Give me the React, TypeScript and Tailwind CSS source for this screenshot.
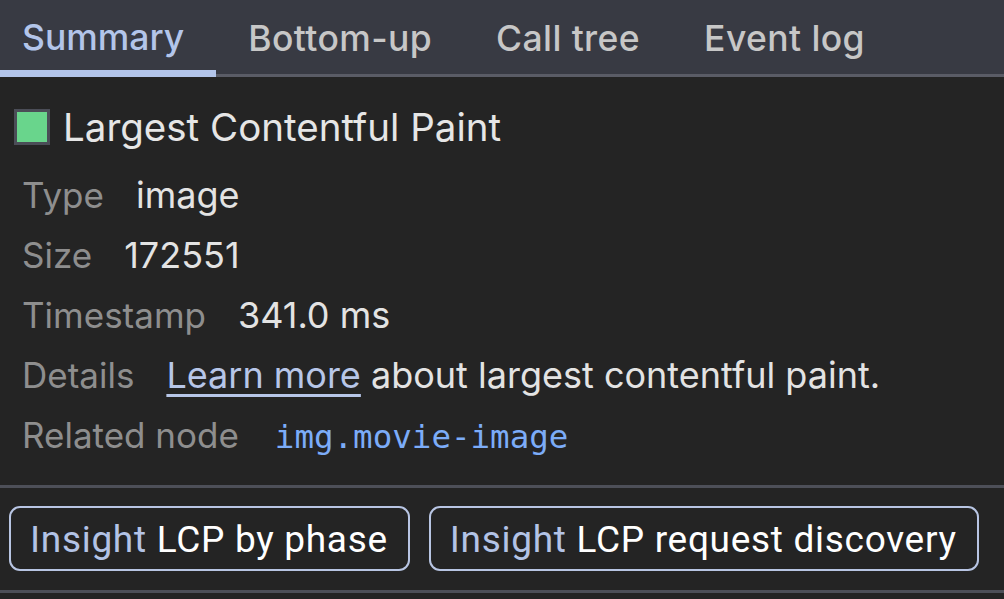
const tabs = ["Summary", "Bottom-up", "Call tree", "Event log"];

const rows: { label: string; value: React.ReactNode }[] = [
  { label: "Type", value: <span className="text-[#e3e3e3]">image</span> },
  { label: "Size", value: <span className="text-[#e3e3e3]">172551</span> },
  { label: "Timestamp", value: <span className="text-[#e3e3e3]">341.0 ms</span> },
  {
    label: "Details",
    value: (
      <span className="text-[#e3e3e3]">
        <a className="text-[#b7c6e8] underline decoration-[2.5px] underline-offset-[6px]">Learn more</a> about largest
        contentful paint.
      </span>
    ),
  },
  {
    label: "Related node",
    value: (
      <span className="ml-[4px] font-['DejaVu_Sans_Mono',monospace] text-[32.5px] text-[#7cacf8]">img.movie-image</span>
    ),
  },
];

export default function App() {
  return (
    <div className="h-[599px] w-[1004px] overflow-hidden bg-[#242424] font-['Inter',sans-serif]">
      <div className="flex h-[77px] items-end border-b-[3px] border-[#5a5c66] bg-[#383a43]">
        {tabs.map((t, i) => (
          <div
            key={t}
            className={
              i === 0
                ? "relative -mb-[3px] flex h-[77px] items-center rounded-tr-[5px] border-b-[7px] border-[#b3c5ea] pl-[22px] pr-[32px]"
                : "flex h-[74px] items-center px-[32px]"
            }
          >
            <span
              className={
                "text-[35.5px] font-medium leading-none " +
                (i === 0 ? "pt-[6px] text-[#b3c5ea]" : "pt-[3px] tracking-[0.4px] text-[#c7c7c7]")
              }
            >
              {t}
            </span>
          </div>
        ))}
      </div>

      <div className="flex items-center gap-[13px] pl-[14px] pt-[29px]">
        <div className="h-[36px] w-[36px] border-[3px] border-[#4b4d57] bg-[#69d58c]" />
        <span className="text-[38.5px] leading-[42px] text-[#e6e6e6]">Largest Contentful Paint</span>
      </div>

      <div className="mt-[17px] flex flex-col pl-[22px]">
        {rows.map((r) => (
          <div key={r.label} className="flex h-[60px] items-center gap-[32px] text-[35px]">
            <span className="text-[#8e8e8e]">{r.label}</span>
            <span className="text-[36px]">{r.value}</span>
          </div>
        ))}
      </div>

      <div className="mt-[20px] h-[3px] bg-[#4d4f58]" />

      <div className="flex gap-[19px] px-[9px] pt-[18px] pb-[19px]">
        {[
          ["Insight", "LCP by phase"],
          ["Insight", "LCP request discovery"],
        ].map(([a, b]) => (
          <div
            key={b}
            className="flex h-[65px] items-center rounded-[11px] border-[2.5px] border-[#b8c5e3] pl-[19px] pr-[20px] pt-[2px] font-['Roboto',sans-serif] text-[37px] tracking-[0.7px]"
          >
            <span className="text-[#b3c3e6]">{a}</span>
            <span className="ml-[10px] text-white">{b}</span>
          </div>
        ))}
      </div>

      <div className="h-[3px] bg-[#4d4f58]" />
    </div>
  );
}
